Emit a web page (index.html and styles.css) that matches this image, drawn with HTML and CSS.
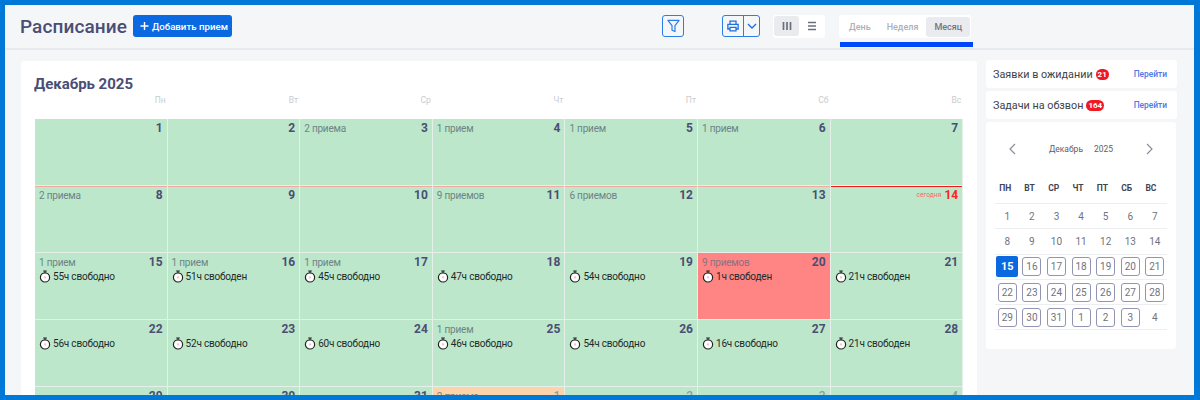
FILE: index.html
```html
<!DOCTYPE html>
<html lang="ru">
<head>
<meta charset="utf-8">
<title>Расписание</title>
<link rel="stylesheet" href="styles.css">
</head>
<body>
<svg class="sprite" width="0" height="0"><defs>
<symbol id="watch" viewBox="0 0 12 13"><circle cx="6" cy="7.400" r="4.600" fill="#fff" stroke="#222" stroke-width="1.200"/><path d="M4.200 1h3.600M6 1v1.800" stroke="#222" stroke-width="1.200" fill="none"/><path d="M6 6.400v2" stroke="#f08a8a" stroke-width="1"/></symbol>
</defs></svg>
<div class="app">
  <header class="topbar">
    <div class="title-group">
      <h1 class="title">Расписание</h1>
      <button class="add-btn"><svg width="12" height="12" viewBox="0 0 12 12"><path d="M6.500 2v8M2.500 6h8" stroke="#fff" stroke-width="1.400"/></svg>Добавить прием</button>
    </div>
    <div class="tools">
      <button class="icon-btn filter"><svg width="13" height="14" viewBox="0 0 14 15"><path d="M1 1.500h12L8.600 7.200v6.300L5.400 12V7.200z" fill="none" stroke="#2b7de9" stroke-width="1.300" stroke-linejoin="round"/></svg></button>
      <div class="print-group">
        <button class="print-main"><svg width="12" height="12" viewBox="0 0 14 14"><path d="M3.500 5V1.200h7V5M3.500 10.500H1V5h12v5.500h-2.500M3.500 8.500h7v4.300h-7z" fill="none" stroke="#1f6fe0" stroke-width="1.500"/></svg></button>
        <button class="print-caret"><svg width="10" height="6" viewBox="0 0 10 6"><path d="M1 1l4 4 4-4" fill="none" stroke="#1f6fe0" stroke-width="1.400"/></svg></button>
      </div>
      <div class="view-toggle">
        <span class="view-opt active"><svg width="10" height="10" viewBox="0 0 10 10"><path d="M1.500 1v8M5 1v8M8.500 1v8" stroke="#68707c" stroke-width="1.700"/></svg></span>
        <span class="view-opt"><svg width="10" height="10" viewBox="0 0 10 10"><path d="M1 1.500h8M1 5h8M1 8.500h8" stroke="#68707c" stroke-width="1.300"/></svg></span>
      </div>
      <div class="period-wrap">
        <div class="period">
          <span class="period-opt">День</span>
          <span class="period-opt">Неделя</span>
          <span class="period-opt active">Месяц</span>
        </div>
        <div class="period-bar"></div>
      </div>
    </div>
  </header>
  <main class="content">
    <section class="card">
      <h2 class="month">Декабрь 2025</h2>
      <div class="weekdays"><span>Пн</span><span>Вт</span><span>Ср</span><span>Чт</span><span>Пт</span><span>Сб</span><span>Вс</span></div>
      <div class="grid">
        <div class="cell"><div class="cell-head"><span class="count"></span><span class="num">1</span></div></div>
        <div class="cell"><div class="cell-head"><span class="count"></span><span class="num">2</span></div></div>
        <div class="cell"><div class="cell-head"><span class="count">2 приема</span><span class="num">3</span></div></div>
        <div class="cell"><div class="cell-head"><span class="count">1 прием</span><span class="num">4</span></div></div>
        <div class="cell"><div class="cell-head"><span class="count">1 прием</span><span class="num">5</span></div></div>
        <div class="cell"><div class="cell-head"><span class="count">1 прием</span><span class="num">6</span></div></div>
        <div class="cell"><div class="cell-head"><span class="count"></span><span class="num">7</span></div></div>

        <div class="cell past-line"><div class="cell-head"><span class="count">2 приема</span><span class="num">8</span></div></div>
        <div class="cell past-line"><div class="cell-head"><span class="count"></span><span class="num">9</span></div></div>
        <div class="cell past-line"><div class="cell-head"><span class="count"></span><span class="num">10</span></div></div>
        <div class="cell past-line"><div class="cell-head"><span class="count">9 приемов</span><span class="num">11</span></div></div>
        <div class="cell past-line"><div class="cell-head"><span class="count">6 приемов</span><span class="num">12</span></div></div>
        <div class="cell past-line"><div class="cell-head"><span class="count"></span><span class="num">13</span></div></div>
        <div class="cell today-line"><div class="cell-head"><span class="count"></span><span class="today-label">сегодня</span><span class="num today">14</span></div></div>

        <div class="cell"><div class="cell-head"><span class="count">1 прием</span><span class="num">15</span></div><div class="free"><svg class="watch"><use href="#watch"/></svg>55ч свободно</div></div>
        <div class="cell"><div class="cell-head"><span class="count">1 прием</span><span class="num">16</span></div><div class="free"><svg class="watch"><use href="#watch"/></svg>51ч свободен</div></div>
        <div class="cell"><div class="cell-head"><span class="count">1 прием</span><span class="num">17</span></div><div class="free"><svg class="watch"><use href="#watch"/></svg>45ч свободно</div></div>
        <div class="cell"><div class="cell-head"><span class="count"></span><span class="num">18</span></div><div class="free"><svg class="watch"><use href="#watch"/></svg>47ч свободно</div></div>
        <div class="cell"><div class="cell-head"><span class="count"></span><span class="num">19</span></div><div class="free"><svg class="watch"><use href="#watch"/></svg>54ч свободно</div></div>
        <div class="cell busy"><div class="cell-head"><span class="count">9 приемов</span><span class="num">20</span></div><div class="free"><svg class="watch"><use href="#watch"/></svg>1ч свободен</div></div>
        <div class="cell"><div class="cell-head"><span class="count"></span><span class="num">21</span></div><div class="free"><svg class="watch"><use href="#watch"/></svg>21ч свободен</div></div>

        <div class="cell"><div class="cell-head"><span class="count"></span><span class="num">22</span></div><div class="free"><svg class="watch"><use href="#watch"/></svg>56ч свободно</div></div>
        <div class="cell"><div class="cell-head"><span class="count"></span><span class="num">23</span></div><div class="free"><svg class="watch"><use href="#watch"/></svg>52ч свободно</div></div>
        <div class="cell"><div class="cell-head"><span class="count"></span><span class="num">24</span></div><div class="free"><svg class="watch"><use href="#watch"/></svg>60ч свободно</div></div>
        <div class="cell"><div class="cell-head"><span class="count">1 прием</span><span class="num">25</span></div><div class="free"><svg class="watch"><use href="#watch"/></svg>46ч свободно</div></div>
        <div class="cell"><div class="cell-head"><span class="count"></span><span class="num">26</span></div><div class="free"><svg class="watch"><use href="#watch"/></svg>54ч свободно</div></div>
        <div class="cell"><div class="cell-head"><span class="count"></span><span class="num">27</span></div><div class="free"><svg class="watch"><use href="#watch"/></svg>16ч свободно</div></div>
        <div class="cell"><div class="cell-head"><span class="count"></span><span class="num">28</span></div><div class="free"><svg class="watch"><use href="#watch"/></svg>21ч свободен</div></div>

        <div class="cell"><div class="cell-head"><span class="count"></span><span class="num">29</span></div></div>
        <div class="cell"><div class="cell-head"><span class="count"></span><span class="num">30</span></div></div>
        <div class="cell"><div class="cell-head"><span class="count"></span><span class="num">31</span></div></div>
        <div class="cell warm"><div class="cell-head"><span class="count">2 приема</span><span class="num muted">1</span></div></div>
        <div class="cell"><div class="cell-head"><span class="count"></span><span class="num muted">2</span></div></div>
        <div class="cell"><div class="cell-head"><span class="count"></span><span class="num muted">3</span></div></div>
        <div class="cell"><div class="cell-head"><span class="count"></span><span class="num muted">4</span></div></div>
      </div>
    </section>
    <aside class="side">
      <div class="side-row"><span class="side-label">Заявки в ожидании<b class="badge">21</b></span><a class="go">Перейти</a></div>
      <div class="side-row"><span class="side-label">Задачи на обзвон<b class="badge">164</b></span><a class="go">Перейти</a></div>
      <div class="mini">
        <div class="mini-head">
          <svg width="8" height="12" viewBox="0 0 8 12"><path d="M7 1L2 6l5 5" fill="none" stroke="#8a8f98" stroke-width="1.200"/></svg>
          <span class="mini-title"><span>Декабрь</span><span>2025</span></span>
          <svg width="8" height="12" viewBox="0 0 8 12"><path d="M1 1l5 5-5 5" fill="none" stroke="#8a8f98" stroke-width="1.200"/></svg>
        </div>
        <div class="mini-grid mini-dow"><span>ПН</span><span>ВТ</span><span>СР</span><span>ЧТ</span><span>ПТ</span><span>СБ</span><span>ВС</span></div>
        <div class="mini-grid mini-week"><span>1</span><span>2</span><span>3</span><span>4</span><span>5</span><span>6</span><span>7</span></div>
        <div class="mini-grid mini-week"><span>8</span><span>9</span><span>10</span><span>11</span><span>12</span><span>13</span><span>14</span></div>
        <div class="mini-grid mini-week"><span class="sel">15</span><span class="box">16</span><span class="box">17</span><span class="box">18</span><span class="box">19</span><span class="box">20</span><span class="box">21</span></div>
        <div class="mini-grid mini-week"><span class="box">22</span><span class="box">23</span><span class="box">24</span><span class="box">25</span><span class="box">26</span><span class="box">27</span><span class="box">28</span></div>
        <div class="mini-grid mini-week"><span class="box">29</span><span class="box">30</span><span class="box">31</span><span class="box">1</span><span class="box">2</span><span class="box">3</span><span>4</span></div>
      </div>
    </aside>
  </main>
</div>
<div class="frame"></div>
</body>
</html>
```
FILE: styles.css
```css
* { box-sizing: border-box; }
html, body { margin: 0; height: 400px; overflow: hidden; }
body { background: #f5f6f7; font-family: Roboto, "Liberation Sans", sans-serif; color: #4a4e74; }
.sprite { position: absolute; }
.frame { position: absolute; inset: 0; border: 5px solid #0078d7; border-right-width: 6px; pointer-events: none; }
.app { height: 400px; overflow: hidden; padding: 5px 5px 0 5px; }

.topbar { height: 45px; display: flex; justify-content: space-between; padding: 0 0 0 15px; border-bottom: 2px solid #e7eaee; }
.title-group { display: flex; align-items: flex-start; gap: 6px; padding-top: 10px; }
.title { margin: 0; font-size: 19px; line-height: 24px; font-weight: 500; color: #4a4e74; letter-spacing: .1px; }
.add-btn { display: flex; align-items: center; gap: 2px; height: 22px; width: 99px; padding: 0 0 0 5px; border: 0; border-radius: 3px; background: #0a68e0; color: #fff; font: 500 9.700px Roboto, sans-serif; white-space: nowrap; }
.tools { display: flex; align-items: flex-start; padding: 10px 222px 0 0; }
.icon-btn, .print-main, .print-caret { background: none; padding: 0; display: flex; align-items: center; justify-content: center; }
.filter { width: 22px; height: 22px; border: 1px solid #2b7de9; border-radius: 3px; margin-right: 38px; }
.print-group { display: flex; width: 38px; height: 22px; border: 1px solid #2b7de9; border-radius: 3px; margin-right: 13px; }
.print-main { width: 21px; border: 0; border-right: 1px solid #2b7de9; }
.print-caret { flex: 1; border: 0; }
.view-toggle { display: flex; width: 52px; height: 23px; padding: 1px; background: #fff; border-radius: 3px; margin-right: 14px; }
.view-opt { width: 25px; height: 20px; display: flex; align-items: center; justify-content: center; border-radius: 3px; }
.view-opt.active { background: #e9ebee; }
.period-wrap { width: 134px; height: 36px; }
.period { display: flex; align-items: center; height: 23px; padding: 1px; background: #fff; border-radius: 3px; width: 132px; }
.period-opt { font-size: 9px; font-weight: 500; color: #aeb1b8; padding: 0 8px; height: 20px; line-height: 20px; white-space: nowrap; }
.period-opt:first-child { margin-left: 1px; }
.period-opt.active { background: #e9ebee; color: #6f7683; border-radius: 3px; margin-left: auto; }
.period-bar { height: 5px; width: 133px; margin: 4px 0 0 1px; background: #0047fb; }

.content { display: flex; align-items: flex-start; padding: 11px 0 0 16px; gap: 9px; }
.card { width: 956px; height: 340px; background: #fff; border-radius: 3px; padding: 14px 0 0 14px; overflow: hidden; }
.month { margin: 0 0 0 -1px; font-size: 15px; line-height: 18px; font-weight: 700; color: #4a4e74; }
.weekdays { display: grid; grid-template-columns: repeat(7, 132.600px); height: 26px; }
.weekdays span { text-align: right; font-size: 8.500px; line-height: 14px; color: #c9cbcf; padding-right: 2px; }
.grid { display: grid; grid-template-columns: repeat(7, 132.600px); grid-auto-rows: 67px; width: 929px; }
.cell { background: #bde7cb; border-right: 1px solid #e6efe9; border-bottom: 1px solid #e6efe9; padding: 2px 4px; position: relative; min-width: 0; }
.cell-head { display: flex; align-items: center; height: 14px; }
.count { font-size: 10px; letter-spacing: -.2px; color: #6c8486; flex: 1; white-space: nowrap; }
.num { font-size: 12px; font-weight: 700; color: #4a4e74; }
.num.muted { color: #8d9fa4; font-weight: 500; }
.past-line { box-shadow: inset 0 1px 0 #f4a9a0; }
.today-line { box-shadow: inset 0 1px 0 #f21b1b; }
.today-label { font-size: 6.700px; color: #f66; margin-right: 3px; }
.num.today { color: #f22; }
.free { display: flex; align-items: center; gap: 2px; height: 14px; font-size: 10px; letter-spacing: -.2px; color: #1d2b2a; white-space: nowrap; }
.watch { width: 12px; height: 13px; flex: none; }
.busy { background: #ff8585; }
.busy .count { color: #8f6f80; }
.warm { background: #fdd3a9; }

.side { width: 191px; margin-top: -1px; display: flex; flex-direction: column; gap: 3px; }
.side-row { display: flex; align-items: center; justify-content: space-between; height: 28px; padding: 0 10px 0 7px; background: #fff; border-radius: 3px; }
.side-label { display: flex; align-items: center; font-size: 10.800px; color: #3f4347; white-space: nowrap; }
.badge { margin-left: 3px; min-width: 13px; height: 11px; padding: 0 2px; border-radius: 6px; background: #f01822; color: #fff; font-size: 8px; line-height: 11px; font-weight: 700; text-align: center; }
.go { font-size: 8.400px; font-weight: 500; color: #4a78e8; }
.mini { width: 190px; height: 227px; background: #fff; border-radius: 3px; padding: 19px 9px 0 9px; }
.mini-head { display: flex; justify-content: space-between; align-items: center; padding: 0 13px; height: 16px; }
.mini-title { display: flex; gap: 11px; font-size: 8.500px; color: #5c6067; }
.mini-grid { display: grid; grid-template-columns: repeat(7, 24.600px); justify-items: center; align-items: center; }
.mini-dow { grid-template-columns: repeat(7, 24.300px); margin-top: 19px; height: 28px; padding-bottom: 4px; font-size: 8.500px; font-weight: 700; color: #3e4452; border-bottom: 1px solid #eceef0; }
.mini-dow span { padding-right: 4px; }
.mini-week { height: 25.300px; font-size: 10px; color: #6f7380; border-bottom: 1px solid #eceef0; }
.box { width: 19px; height: 19px; border: 1px solid #9294b2; border-radius: 3px; display: flex; align-items: center; justify-content: center; }
.sel { width: 22px; height: 21px; background: #0a68e0; color: #fff; font-weight: 700; font-size: 11px; border-radius: 2px; display: flex; align-items: center; justify-content: center; }
```
